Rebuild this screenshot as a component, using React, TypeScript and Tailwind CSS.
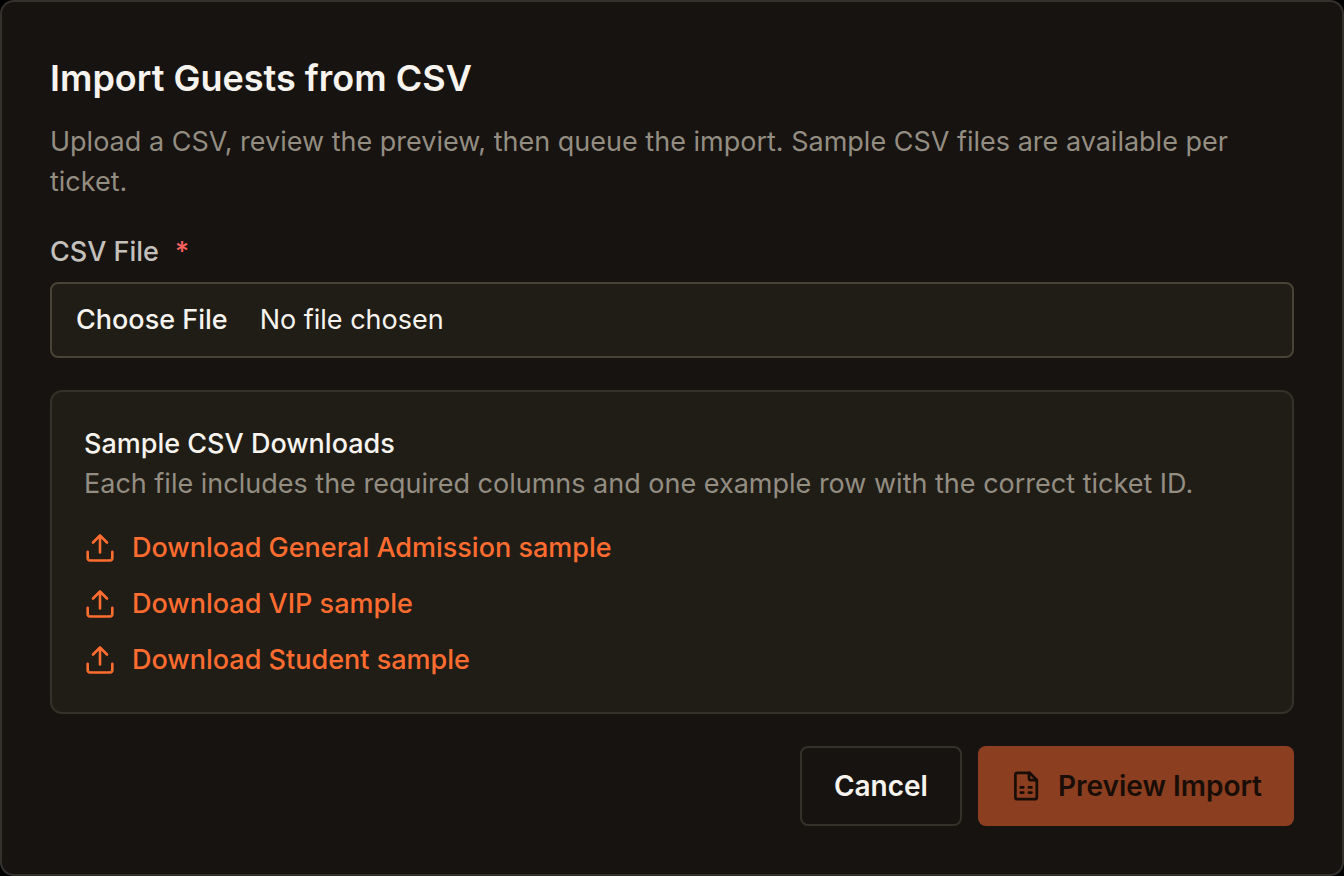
import React from 'react';

const samples = ['General Admission', 'VIP', 'Student'];

const UploadIcon: React.FC = () => (
  <svg
    className="size-8 shrink-0"
    viewBox="0 0 32 32"
    fill="none"
    stroke="currentColor"
    strokeWidth="2.6"
    strokeLinecap="round"
    strokeLinejoin="round"
    aria-hidden="true"
  >
    <path d="M16 20.5V3.5M9 10.5l7-7 7 7" />
    <path d="M3.7 19.8v6.3a2.4 2.4 0 0 0 2.4 2.4h19.8a2.4 2.4 0 0 0 2.4-2.4v-6.3" />
  </svg>
);

const SheetIcon: React.FC = () => (
  <svg
    className="size-8 shrink-0"
    viewBox="0 0 32 32"
    fill="none"
    stroke="currentColor"
    strokeWidth="2.7"
    strokeLinecap="round"
    strokeLinejoin="round"
    aria-hidden="true"
  >
    <path d="M19.6 2.8H7.4a2 2 0 0 0-2 2v22.4a2 2 0 0 0 2 2h17.4a2 2 0 0 0 2-2V10z" />
    <path d="M19 2.8v5.4a2 2 0 0 0 2 2h5.8" />
    <path d="M10.7 17.4h2.6M18.9 17.4h2.6M10.7 22.6h2.6M18.9 22.6h2.6" />
  </svg>
);

const ImportGuestsDialog: React.FC = () => {
  return (
    <section
      role="dialog"
      aria-labelledby="import-title"
      className="flex flex-col gap-8 rounded-[14px] border-2 border-[#34312d] bg-[#171310] p-12 text-[27px] leading-10 text-[#f7f3ee]"
    >
      <header className="flex flex-col gap-4">
        <h2 id="import-title" className="text-4xl leading-14 font-semibold">
          Import Guests from CSV
        </h2>
        <p className="text-[#938d82]">
          Upload a CSV, review the preview, then queue the import. Sample CSV files are available per ticket.
        </p>
      </header>

      <div className="flex flex-col gap-3">
        <label htmlFor="csv-file" className="flex gap-4 leading-9 font-medium text-[#c4c0bb]">
          CSV File <span className="text-[#ff6161]">*</span>
        </label>
        <input
          id="csv-file"
          type="file"
          accept=".csv"
          required
          className="w-full rounded-lg border-2 border-[#494337] bg-[#201d17] px-6 py-4 file:mr-8 file:border-0 file:bg-transparent file:p-0 file:font-medium file:text-[#f7f3ee]"
        />
      </div>

      <div className="flex flex-col gap-6 rounded-xl border-2 border-[#34312a] bg-[#201d17] p-8">
        <div>
          <h3 className="font-medium">Sample CSV Downloads</h3>
          <p className="text-[#938d82]">
            Each file includes the required columns and one example row with the correct ticket ID.
          </p>
        </div>
        <ul className="flex flex-col gap-4">
          {samples.map((name) => (
            <li key={name} className="flex">
              <a href="#" className="flex items-center gap-4 font-medium text-[#ff6c2f]">
                <UploadIcon />
                Download {name} sample
              </a>
            </li>
          ))}
        </ul>
      </div>

      <footer className="flex justify-end gap-4 text-[28px] leading-10 font-semibold">
        <button type="button" className="rounded-lg border-2 border-[#34312a] px-8 py-[18px]">
          Cancel
        </button>
        <button
          type="button"
          disabled
          className="flex items-center gap-4 rounded-lg bg-[#8c3e20] px-8 py-5 text-[#190e07]"
        >
          <SheetIcon />
          Preview Import
        </button>
      </footer>
    </section>
  );
};

export default function App() {
  return (
    <main className="min-h-screen bg-black font-['Inter',sans-serif]">
      <ImportGuestsDialog />
    </main>
  );
}
